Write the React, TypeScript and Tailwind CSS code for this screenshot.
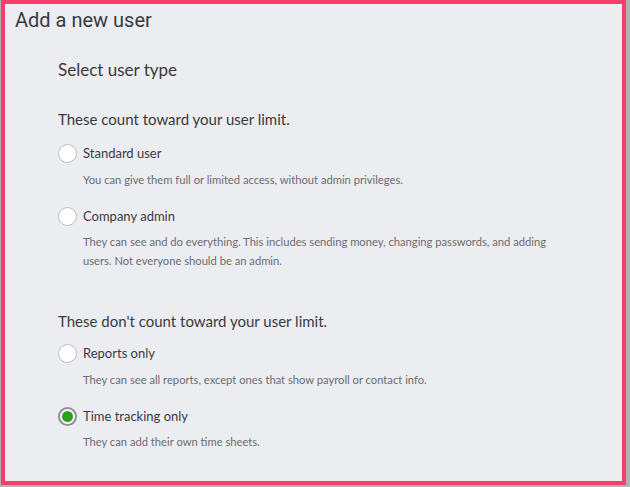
import React from "react";

type Option = { label: string; desc: string; checked?: boolean };

const counted: Option[] = [
  {
    label: "Standard user",
    desc: "You can give them full or limited access, without admin privileges.",
  },
  {
    label: "Company admin",
    desc: "They can see and do everything. This includes sending money, changing passwords, and adding users. Not everyone should be an admin.",
  },
];

const notCounted: Option[] = [
  {
    label: "Reports only",
    desc: "They can see all reports, except ones that show payroll or contact info.",
  },
  {
    label: "Time tracking only",
    desc: "They can add their own time sheets.",
    checked: true,
  },
];

function Radio({ checked }: { checked?: boolean }) {
  return (
    <span
      className={
        checked
          ? "flex h-[19px] w-[19px] shrink-0 items-center justify-center rounded-full border-2 border-[#8d9096] bg-white"
          : "flex h-[19px] w-[19px] shrink-0 items-center justify-center rounded-full border border-[#babec5] bg-white"
      }
    >
      {checked && <span className="h-[11px] w-[11px] rounded-full bg-[#2ca01c]" />}
    </span>
  );
}

function Choice({ opt }: { opt: Option }) {
  return (
    <div className="flex flex-col">
      <div className="flex items-center gap-[6px]">
        <Radio checked={opt.checked} />
        <span className="text-[13px] text-[#393a3d]">{opt.label}</span>
      </div>
      <p className="mt-[6px] pl-[25px] pr-[40px] text-[11.2px] leading-[19px] text-[#6b6c72]">
        {opt.desc}
      </p>
    </div>
  );
}

function Group({ title, options, first }: { title: string; options: Option[]; first?: boolean }) {
  return (
    <section>
      <h3 className="text-[15px] leading-[20px] text-[#393a3d]">{title}</h3>
      <div className={first ? "mt-[15px] flex flex-col gap-[18px]" : "mt-[13px] flex flex-col gap-[18px]"}>
        {options.map((o) => (
          <Choice key={o.label} opt={o} />
        ))}
      </div>
    </section>
  );
}

export default function App() {
  return (
    <div className="h-[487px] w-[630px] bg-[#b3b3b3] pl-[1px]" style={{ fontFamily: "Lato, 'Open Sans', sans-serif" }}>
      <div className="h-[485px] w-[625px] border-4 border-[#f43f6d] bg-[#ecedf1]">
        <h1
          className="pl-[10px] pt-[3px] text-[20px] leading-[26px] text-[#393a3d]"
          style={{ fontFamily: "Roboto, sans-serif" }}
        >
          Add a new user
        </h1>
        <div className="pl-[53px] pr-[20px]">
          <h2 className="mt-[26px] text-[17px] leading-[22px] text-[#393a3d]">Select user type</h2>
          <div className="mt-[28px] flex flex-col gap-[41px]">
            <Group title="These count toward your user limit." options={counted} first />
            <Group title="These don't count toward your user limit." options={notCounted} />
          </div>
        </div>
      </div>
    </div>
  );
}
